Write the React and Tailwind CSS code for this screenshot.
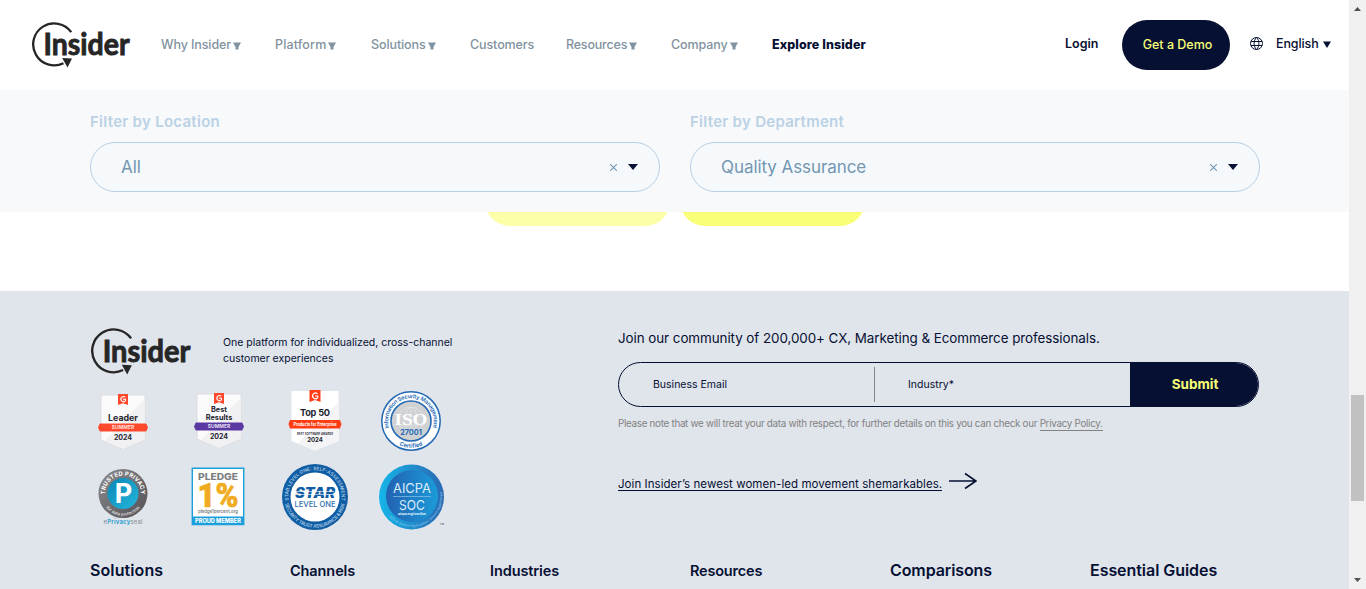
import React from "react";

function Logo({ size }) {
  return (
    <svg className={"block " + size} viewBox="0 0 100 46">
      <path d="M39.3 10.2A21 21 0 1 0 31.500 41.200" fill="none" stroke="#262626" strokeWidth="2.300" />
      <path d="M30.200 36.100L40 36.500 35.500 45.500Z" fill="#262626" />
      <text x="11.500" y="33" fontFamily="Lato, sans-serif" fontWeight="700" fontSize="30.500" textLength="86" lengthAdjust="spacingAndGlyphs" fill="#262626" stroke="#262626" strokeWidth="0.900">
        Insider
      </text>
    </svg>
  );
}

function Caret() {
  return (
    <svg className="mt-px h-2 w-2" viewBox="0 0 8 8">
      <path d="M0 0.500H8L5.500 5V7.500H2.500V5Z" fill="currentColor" />
    </svg>
  );
}

const NAV = [
  { label: "Why Insider", caret: true, cls: "w-[114px] tracking-[-0.1px]" },
  { label: "Platform", caret: true, cls: "w-24 tracking-[0.15px]" },
  { label: "Solutions", caret: true, cls: "w-[99px] tracking-[-0.1px]" },
  { label: "Customers", caret: false, cls: "w-24 tracking-[-0.1px]" },
  { label: "Resources", caret: true, cls: "w-[105px] tracking-[-0.2px]" },
  { label: "Company", caret: true, cls: "w-[101px] tracking-[-0.1px]" },
];

function Header() {
  return (
    <header className="flex h-[90px] shrink-0 items-center bg-white pl-8 text-[12.5px] text-[#051033]">
      <div className="w-[129px]">
        <Logo size="h-[46px] w-[100px]" />
      </div>
      <nav className="flex w-[904px] items-center font-medium text-[#8192a0]">
        {NAV.map((n) => (
          <a key={n.label} className={"flex items-center gap-0.5 whitespace-nowrap " + n.cls}>
            {n.label}
            {n.caret && <Caret />}
          </a>
        ))}
        <a className="whitespace-nowrap font-extrabold tracking-[0.1px] text-[#051033]">Explore Insider</a>
      </nav>
      <a className="w-[57px] pb-0.5 font-semibold">Login</a>
      <a className="mr-5 flex h-[50px] w-[108px] items-center justify-center whitespace-nowrap rounded-[25px] bg-[#051033] pl-[3px] font-medium text-[#f9ff77]">
        Get a Demo
      </a>
      <svg className="mb-1 mr-[13px] h-[13px] w-[13px]" viewBox="0 0 13 13" fill="none" stroke="#051033">
        <circle cx="6.500" cy="6.500" r="6" />
        <path d="M6.500 .5C3.300 3.500 3.300 9.500 6.500 12.500M6.500 .5C9.700 3.500 9.700 9.500 6.500 12.500M1 4.500H12M1 8.500H12" />
      </svg>
      <span className="flex items-center gap-1 pb-0.5 font-medium tracking-[-0.1px]">
        English
        <svg className="h-[7px] w-2" viewBox="0 0 8 7">
          <path d="M0 0.500H8L4 7Z" fill="#051033" />
        </svg>
      </span>
    </header>
  );
}

function Filter({ label, value, valueCls }) {
  return (
    <div className="w-[570px]">
      <div className="mb-[8px] text-[15px] font-semibold leading-6 tracking-[0.28px] text-[#bad2e5]">{label}</div>
      <div className="flex h-[50px] items-center rounded-[25px] border border-[#b8d0e4] bg-[#f5f9fc] pl-[30px] pr-[21px]">
        <span className={"flex-1 pt-0.5 text-[17px] text-[#7396b1] " + valueCls}>{value}</span>
        <svg className="mr-[11px] mt-px h-[7px] w-[7px]" viewBox="0 0 7 7">
          <path d="M0 0L7 7M7 0L0 7" stroke="#7396b1" strokeWidth="1.100" />
        </svg>
        <svg className="h-1.5 w-2.5" viewBox="0 0 10 6">
          <path d="M0 0H10L5 6Z" fill="#051033" />
        </svg>
      </div>
    </div>
  );
}

function G2Badge({ lines, band, bandColor, year, top = 18, small }) {
  return (
    <svg className="h-[60px] w-[54px]" viewBox="0 0 54 60" fontFamily="Inter, sans-serif" textAnchor="middle">
      <path d="M5 1H49V46L27 55.500 5 46Z" fill="#fbfbfc" stroke="#dcdcdf" strokeWidth="1" />
      <path d="M48.500 5V45.700L27 55 9 47Z" fill="#f1f1f3" />
      <path d="M22 0H32V11L27 9.300 22 11Z" fill="#ff492c" />
      <path d="M29.200 3.200A2.600 2.600 0 1 0 29.200 7.200M27 5.300H29.500V7.200" fill="none" stroke="#fff" strokeWidth="1.100" />
      {lines.map((l, i) => (
        <text key={l} x="27" y={top + i * 8} fontSize={small ? 7.3 : 8.8} fontWeight="700" fill="#252530">
          {l}
        </text>
      ))}
      <path d="M4 30H50L51.500 33.500 50 37H4L2.500 33.500Z" fill={bandColor} stroke={bandColor} strokeWidth="1" />
      <text x="27" y="35.400" fontSize="5" fontWeight="700" fill="#fff" fillOpacity=".85">{band}</text>
      <text x="27" y="46" fontSize="7" fontWeight="700" fill="#252530">{year}</text>
    </svg>
  );
}

function Top50() {
  return (
    <svg className="h-[62px] w-[54px]" viewBox="0 0 54 62" fontFamily="Inter, sans-serif" textAnchor="middle">
      <path d="M3.500 1H50.500V51L27 60.500 3.500 51Z" fill="#fff" />
      <path d="M50.500 12V51L27 60.500 10 53.500Z" fill="#f4f4f6" />
      <path d="M21.500 0H32.500V12L27 10 21.500 12Z" fill="#ff3d14" />
      <path d="M29.500 3.800A2.900 2.900 0 1 0 29.500 8M27 6H29.700V8" fill="none" stroke="#fff" strokeWidth="1.200" />
      <text x="27" y="25.500" fontSize="9.200" fontWeight="700" fill="#252530" textLength="30">Top 50</text>
      <path d="M2 30H52L53.500 34 52 38.500H2L.5 34Z" fill="#ff3d14" />
      <text x="27" y="36" fontSize="5" fontWeight="700" fill="#fff" textLength="43" lengthAdjust="spacingAndGlyphs">Products for Enterprise</text>
      <text x="27" y="44.500" fontSize="3.500" fontWeight="600" fill="#252530" textLength="36" lengthAdjust="spacingAndGlyphs">BEST SOFTWARE AWARDS</text>
      <text x="27" y="52" fontSize="6" fontWeight="700" fill="#252530">2024</text>
    </svg>
  );
}

function IsoBadge() {
  return (
    <svg className="h-[60px] w-[60px]" viewBox="0 0 60 60" fontFamily="Inter, sans-serif" textAnchor="middle">
      <circle cx="30" cy="30" r="29.200" fill="#fff" stroke="#2268b2" strokeWidth="1.500" />
      <circle cx="30" cy="30" r="20" fill="#cfd1d2" stroke="#2268b2" strokeWidth="1.600" />
      <g fill="none" stroke="#e4e6e6" strokeWidth=".7">
        <circle cx="30" cy="29" r="13" />
        <ellipse cx="30" cy="29" rx="6" ry="13" />
        <path d="M17 25H43M17 34H43M30 16V42" />
      </g>
      <path id="isoTop" d="M8.650 38A22.800 22.800 0 1 1 51.350 38" fill="none" />
      <path id="isoBottom" d="M14 51.500A26.800 26.800 0 0 0 46 51.500" fill="none" />
      <text fontSize="5.600" fontWeight="600" fill="#2268b2">
        <textPath href="#isoTop" startOffset="50%" textLength="85">Information Security Management</textPath>
      </text>
      <text fontSize="5.700" fontWeight="600" fill="#2268b2">
        <textPath href="#isoBottom" startOffset="50%">Certified</textPath>
      </text>
      <text x="30" y="34" fontFamily="Liberation Serif, serif" fontSize="17" fontWeight="700" fill="#fff" textLength="33" lengthAdjust="spacingAndGlyphs">ISO</text>
      <text x="30" y="43.500" fontSize="7.300" fontWeight="700" fill="#2268b2">27001</text>
    </svg>
  );
}

function PrivacySeal() {
  return (
    <svg className="h-[60px] w-[54px]" viewBox="0 0 54 60" fontFamily="Inter, sans-serif" textAnchor="middle">
      <defs>
        <linearGradient id="sealRing" x1="0" y1="0" x2="1" y2="1">
          <stop offset="0" stopColor="#8b8b8e" />
          <stop offset="1" stopColor="#535156" />
        </linearGradient>
        <linearGradient id="sealCore" x1="0" y1="0" x2="1" y2="1">
          <stop offset="0" stopColor="#0b87b5" />
          <stop offset="1" stopColor="#25b6dc" />
        </linearGradient>
      </defs>
      <circle cx="27" cy="25.500" r="24.500" fill="url(#sealRing)" />
      <circle cx="27" cy="25.500" r="15.500" fill="url(#sealCore)" />
      <path id="sealTop" d="M10.200 32A18 18 0 1 1 43.800 32" fill="none" />
      <path id="sealBottom" d="M9.500 39A22 22 0 0 0 44.500 39" fill="none" />
      <text fontSize="5.800" fontWeight="700" fill="#fff">
        <textPath href="#sealTop" startOffset="50%" textLength="58">TRUSTED PRIVACY</textPath>
      </text>
      <text fontSize="4.300" fontWeight="500" fill="#e2e2e2">
        <textPath href="#sealBottom" startOffset="50%">for data protection</textPath>
      </text>
      <text x="27.500" y="35" fontSize="27" fontWeight="700" fill="#fff">P</text>
      <text x="27" y="56" fontSize="6" fill="#85888f" textLength="39">
        e<tspan fontWeight="700" fill="#3ba6d1">Privacy</tspan>seal
      </text>
    </svg>
  );
}

function Pledge() {
  return (
    <svg className="h-[60px] w-[54px]" viewBox="0 0 54 60" fontFamily="Inter, sans-serif" textAnchor="middle">
      <path d="M1.300 1.300H52.700V57.500H1.300Z" fill="#fff" stroke="#1a9fda" strokeWidth="1.400" />
      <path d="M1 49.500H53V58H1Z" fill="#1a9fda" />
      <text x="27" y="12.500" fontSize="9" fontWeight="800" fill="#7c7e80" textLength="40" lengthAdjust="spacingAndGlyphs">PLEDGE</text>
      <text x="27" y="40" fontFamily="Roboto, sans-serif" fontSize="34" fontWeight="900" fill="#f0ab21" stroke="#f0ab21" strokeWidth=".7" textLength="41" lengthAdjust="spacingAndGlyphs">1%</text>
      <text x="27" y="46" fontSize="4.300" fontWeight="600" fill="#7c7e80" textLength="40">pledge1percent.org</text>
      <text x="27" y="56" fontSize="5.600" fontWeight="800" fill="#fff" textLength="46" lengthAdjust="spacingAndGlyphs">PROUD MEMBER</text>
    </svg>
  );
}

function StarBadge() {
  return (
    <svg className="h-[66px] w-[66px]" viewBox="0 0 66 66" fontFamily="Inter, sans-serif" textAnchor="middle">
      <circle cx="33" cy="33" r="33" fill="#105da3" />
      <circle cx="33" cy="33" r="24.500" fill="#fff" />
      <path id="starTop" d="M6.900 38.500A26.700 26.700 0 1 1 59.100 38.500" fill="none" />
      <path id="starBottom" d="M2.900 39A30.700 30.700 0 0 0 63.100 39" fill="none" />
      <text fontSize="4.800" fontWeight="500" fill="#b9d6ee">
        <textPath href="#starTop" startOffset="50%" textLength="91">STAR LEVEL ONE: SELF-ASSESSMENT</textPath>
      </text>
      <text fontSize="4.800" fontWeight="500" fill="#b9d6ee">
        <textPath href="#starBottom" startOffset="50%" textLength="82">SECURITY TRUST ASSURANCE &amp; RISK</textPath>
      </text>
      <text x="33" y="34" fontSize="14.500" fontWeight="900" fontStyle="italic" fill="#105da3" textLength="40" lengthAdjust="spacingAndGlyphs">STAR</text>
      <path d="M13 27.500H52M13 30.500H52" stroke="#fff" strokeWidth=".6" />
      <text x="33" y="43" fontSize="8" fontWeight="500" fill="#2c6fae" textLength="41" lengthAdjust="spacingAndGlyphs">LEVEL ONE</text>
    </svg>
  );
}

function Aicpa() {
  return (
    <svg className="h-[66px] w-[66px]" viewBox="0 0 66 66" fontFamily="Inter, sans-serif" textAnchor="middle">
      <defs>
        <linearGradient id="socOuter">
          <stop offset="0" stopColor="#16b5e9" />
          <stop offset="1" stopColor="#2a69b3" />
        </linearGradient>
        <linearGradient id="socInner">
          <stop offset="0" stopColor="#2361b1" />
          <stop offset="1" stopColor="#1b9bd9" />
        </linearGradient>
      </defs>
      <circle cx="32.500" cy="33" r="32.500" fill="url(#socOuter)" />
      <circle cx="33" cy="32" r="26" fill="url(#socInner)" />
      <text x="33" y="28.500" fontSize="13.500" fill="#d9edfa" textLength="38" lengthAdjust="spacingAndGlyphs">AICPA</text>
      <path d="M14 32.500H52" stroke="#8cc4ea" strokeWidth=".7" />
      <text x="33" y="45.500" fontSize="13.500" fill="#d9edfa" textLength="26" lengthAdjust="spacingAndGlyphs">SOC</text>
      <text x="33" y="51" fontSize="3.500" fontWeight="700" fill="#d9edfa" textLength="28">aicpa.org/soc4so</text>
      <path id="socArc" d="M9 51.500A30.500 30.500 0 0 0 62.500 26" fill="none" />
      <text fontSize="3" fill="#9fd4f2">
        <textPath href="#socArc" startOffset="50%">SOC for Service Organizations | Service Organizations</textPath>
      </text>
      <text x="63" y="60.500" fontSize="2.500" fill="#333">TM</text>
    </svg>
  );
}

const COLUMNS = [
  ["Solutions", "text-base tracking-[0.1px]"],
  ["Channels", "text-[14.5px] pt-px tracking-[-0.1px]"],
  ["Industries", "text-[14.5px] pt-px tracking-[-0.1px]"],
  ["Resources", "text-[14.5px] pt-px tracking-[-0.2px]"],
  ["Comparisons", "text-base tracking-[-0.1px]"],
  ["Essential Guides", "text-base tracking-[-0.05px]"],
];

function Footer() {
  return (
    <footer className="flex h-[298px] flex-col overflow-hidden bg-[#e0e4eb] pl-[90px] text-[#051033]">
      <div className="flex h-[267px] shrink-0">
        <div className="w-[528px] pt-[37px]">
          <div className="flex h-[62px]">
            <div className="w-[133px] pl-px">
              <Logo size="h-[47px] w-[102px]" />
            </div>
            <p className="pt-[7px] text-[10.5px] leading-4">
              One platform for individualized, cross-channel
              <br />
              customer experiences
            </p>
          </div>
          <div className="grid h-[146px] grid-cols-[96px_95px_96px_100px] grid-rows-[74px_72px]">
            <div className="pl-[6px] pt-1"><G2Badge lines={["Leader"]} band="SUMMER" bandColor="#ff492c" year="2024" top={26.8} /></div>
            <div className="pl-[6px] pt-[3px]"><G2Badge lines={["Best", "Results"]} band="SUMMER" bandColor="#5a39a2" year="2024" small top={19.3} /></div>
            <div className="pl-[7px]"><Top50 /></div>
            <div className="pl-[4px] pt-px"><IsoBadge /></div>
            <div className="pl-[6px] pt-1"><PrivacySeal /></div>
            <div className="pl-[5px] pt-[3px]"><Pledge /></div>
            <div className="pl-[1px]"><StarBadge /></div>
            <div className="pl-[2px]"><Aicpa /></div>
          </div>
        </div>
        <div className="w-[642px] pt-[37px]">
          <div className="whitespace-nowrap text-[13.4px] leading-5 tracking-[-0.06px]">
            Join our community of 200,000+ CX, Marketing &amp; Ecommerce professionals.
          </div>
          <div className="mt-[14px] flex h-[45px] w-[641px] overflow-hidden rounded-[22.5px] border border-[#051033] text-[10.5px]">
            <div className="my-1 flex w-[256px] items-center border-r border-[#858585] pl-[34px]">Business Email</div>
            <div className="flex flex-1 items-center pl-[33px]">Industry*</div>
            <button className="w-[128px] bg-[#051033] pl-0.5 text-[13.5px] font-bold text-[#f9ff77]">Submit</button>
          </div>
          <p className="mt-[9px] whitespace-nowrap text-[9.8px] leading-4 tracking-[-0.28px] text-[#828282]">
            Please note that we will treat your data with respect, for further details on this you can check our{" "}
            <a className="border-b border-[#828282] pb-px">Privacy Policy.</a>
          </p>
          <div className="mt-[37px] flex h-6 items-center gap-[7px]">
            <a className="mt-[6px] whitespace-nowrap border-b border-[#051033] text-[11.5px] leading-[12px] tracking-[0.055px]">
              Join Insider’s newest women-led movement shemarkables.
            </a>
            <svg className="h-[18px] w-7" viewBox="0 0 28 18" fill="none" stroke="#051033" strokeWidth="1.600">
              <path d="M0 9H27M16 1.500L27 9 16 16.500" />
            </svg>
          </div>
        </div>
      </div>
      <div className="grid shrink-0 grid-cols-[200px_200px_200px_200px_200px_200px] font-semibold leading-6">
        {COLUMNS.map(([t, c]) => (
          <h3 key={t} className={"whitespace-nowrap " + c}>{t}</h3>
        ))}
      </div>
    </footer>
  );
}

export default function App() {
  return (
    <div className="flex h-[589px] w-[1366px] overflow-hidden bg-white font-[Inter,sans-serif]">
      <main className="flex w-[1349px] flex-col">
        <Header />
        <section className="flex h-[122px] shrink-0 gap-[30px] bg-[#f8f9fb] pl-[90px] pt-5">
          <Filter label="Filter by Location" value="All" valueCls="" />
          <Filter label="Filter by Department" value="Quality Assurance" valueCls="tracking-[-0.07px]" />
        </section>
        <section className="flex h-[79px] shrink-0 justify-center">
          <div className="flex h-[14px] items-end gap-2.5 overflow-hidden">
            <div className="h-[50px] w-[185px] rounded-[25px] bg-[#fdffa8]" />
            <div className="h-[50px] w-[185px] rounded-[25px] bg-[#f9ff77]" />
          </div>
        </section>
        <Footer />
      </main>
      <aside className="flex w-[17px] flex-col items-center bg-[#f0f0f0]">
        <svg className="mt-[7px] h-1 w-[7px]" viewBox="0 0 7 4"><path d="M0 4L3.500 0 7 4Z" fill="#505050" /></svg>
        <div className="mt-[384px] h-[106px] w-[13px] bg-[#c1c1c1]" />
        <svg className="mt-[77px] h-1 w-[7px]" viewBox="0 0 7 4"><path d="M0 0H7L3.500 4Z" fill="#505050" /></svg>
      </aside>
    </div>
  );
}
